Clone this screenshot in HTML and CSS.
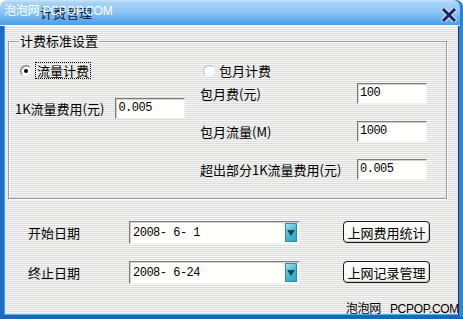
FILE: index.html
```html
<!DOCTYPE html>
<html lang="zh-CN">
<head>
  <meta charset="UTF-8" />
  <title>计费管理</title>
  <link rel="stylesheet" href="styles.css">
</head>
<body>
  <div class="window">
    <div class="titlebar">
      <span class="title">计费管理</span>
      <span class="title-mark">泡泡网 PCPOP.COM</span>
      <svg class="close" width="16" height="14" viewBox="0 0 16 14">
        <path d="M3 2 L13 12 M13 2 L3 12" stroke="#dfe8ff" stroke-width="5" stroke-linecap="round"/>
        <path d="M3 2 L13 12 M13 2 L3 12" stroke="#1b2563" stroke-width="3" stroke-linecap="square"/>
      </svg>
    </div>

    <div class="frame">
      <fieldset class="group">
        <legend>计费标准设置</legend>

        <div class="col col-left">
          <div class="radio-row">
            <span class="radio checked"></span>
            <span class="focus">流量计费</span>
          </div>
          <div class="field field-left">
            <span>1K流量费用(元)</span>
            <div class="input">0.005</div>
          </div>
        </div>

        <div class="col col-right">
          <div class="radio-row">
            <span class="radio"></span>
            <span class="radio-text">包月计费</span>
          </div>
          <div class="field first">
            <span>包月费(元)</span>
            <div class="input">100</div>
          </div>
          <div class="field">
            <span>包月流量(M)</span>
            <div class="input">1000</div>
          </div>
          <div class="field">
            <span>超出部分1K流量费用(元)</span>
            <div class="input">0.005</div>
          </div>
        </div>
      </fieldset>

      <div class="dates">
        <div class="date-row">
          <span class="date-label">开始日期</span>
          <div class="picker">
            <span class="picker-text">2008- 6- 1</span>
            <span class="drop">
              <svg width="8" height="8" viewBox="0 0 8 8"><path d="M0 1 L8 1 L4 7 Z" fill="#16485a"/></svg>
            </span>
          </div>
          <button class="btn">上网费用统计</button>
        </div>
        <div class="date-row">
          <span class="date-label">终止日期</span>
          <div class="picker">
            <span class="picker-text">2008- 6-24</span>
            <span class="drop">
              <svg width="8" height="8" viewBox="0 0 8 8"><path d="M0 1 L8 1 L4 7 Z" fill="#16485a"/></svg>
            </span>
          </div>
          <button class="btn">上网记录管理</button>
        </div>
      </div>
    </div>

    <div class="footer-mark"><span class="cn">泡泡网</span>PCPOP.COM</div>
  </div>
</body>
</html>
```

FILE: styles.css
```css
body {
  margin: 0;
  background: #ffffff;
  font-family: "Noto Sans CJK SC", "Liberation Sans", sans-serif;
  font-size: 13px;
  color: #000;
}

.window {
  position: relative;
  width: 463px;
  height: 319px;
  display: flex;
  flex-direction: column;
  overflow: hidden;
}

.titlebar {
  position: relative;
  height: 26px;
  flex: none;
  background: linear-gradient(#c8e4fc 0, #a4d2f8 3px, #8ec5f4 12px, #62acee 20px, #4e9ee9 25px, #e8f2fc 25px);
  border-radius: 7px 7px 0 0;
  box-shadow: inset -3px 0 0 #2f7fd0;
}

.title {
  position: absolute;
  left: 40px;
  top: 5px;
  font-size: 13px;
  line-height: 16px;
  color: #10234a;
}

.title-mark {
  position: absolute;
  left: 4px;
  top: 3px;
  font-family: "Liberation Sans", "Noto Sans CJK SC", sans-serif;
  font-size: 12px;
  line-height: 16px;
  color: #ffffff;
  letter-spacing: -0.2px;
}

.close {
  position: absolute;
  right: 6px;
  top: 8px;
}

.frame {
  flex: 1;
  display: flex;
  flex-direction: column;
  border-left: 4px solid #1a6cc4;
  border-right: 4px solid #2b86d6;
  border-bottom: 4px solid #1a66bb;
  box-shadow: inset 1px 0 0 #4aa2e6, inset -1px 0 0 #0b3f7c, inset 0 -1px 0 #5aaee8;
  background: repeating-linear-gradient(#f7f7f5 0, #f7f7f5 1px, #dcdcdc 1px, #dcdcdc 2px);
}

.group {
  margin: 8px 12px 0 4px;
  padding: 14px 19px 18px 6px;
  border: 1px solid #9a9a9a;
  box-shadow: 1px 1px 0 #ffffff, inset 1px 1px 0 #ffffff;
  display: flex;
}

.group legend {
  padding: 0 1px;
  margin-left: 4px;
  font-size: 13px;
  line-height: 14px;
}

.col {
  display: flex;
  flex-direction: column;
}

.col-left {
  width: 185px;
}

.col-right {
  flex: 1;
}

.radio-row {
  display: flex;
  align-items: center;
  height: 17px;
}

.radio {
  width: 10px;
  height: 10px;
  border-radius: 50%;
  background: #ffffff;
  border: 1px solid;
  border-color: #7a7a7a #e8e8e8 #e8e8e8 #7a7a7a;
  box-shadow: inset 1px 1px 0 #c0c0c0;
  position: relative;
  flex: none;
}

.col-left .radio {
  margin-left: 5px;
  margin-right: 3px;
}

.col-right .radio {
  margin-left: 3px;
  margin-right: 4px;
  border-color: #b8b8b8 #f4f4f4 #f4f4f4 #b8b8b8;
  box-shadow: none;
}

.radio.checked::after {
  content: "";
  position: absolute;
  left: 3px;
  top: 3px;
  width: 4px;
  height: 4px;
  border-radius: 50%;
  background: #000;
}

.focus {
  border: 1px dotted #000;
  padding: 0 1px;
  line-height: 15px;
}

.field {
  display: flex;
  align-items: center;
  justify-content: space-between;
  margin-top: 17px;
}

.field.first {
  margin-top: 4px;
}

.field-left {
  justify-content: flex-start;
  gap: 11px;
  margin-top: 19px;
}

.input {
  width: 66px;
  height: 19px;
  background: #fffffb;
  border: 1px solid;
  border-color: #7c7c7c #f2f2f2 #f2f2f2 #7c7c7c;
  box-shadow: inset 1px 1px 0 #d4d0c8;
  font-family: "Liberation Mono", monospace;
  font-size: 12px;
  letter-spacing: -0.5px;
  line-height: 18px;
  padding-left: 2px;
  box-sizing: content-box;
}

.dates {
  display: flex;
  flex-direction: column;
  gap: 17px;
  margin-top: 22px;
  padding-left: 24px;
}

.date-row {
  display: flex;
  align-items: flex-start;
}

.date-label {
  width: 101px;
  line-height: 23px;
}

.picker {
  width: 169px;
  height: 21px;
  display: flex;
  align-items: center;
  justify-content: space-between;
  background: #fffffb;
  border: 1px solid;
  border-color: #7c7c7c #f2f2f2 #f2f2f2 #7c7c7c;
  box-shadow: inset 1px 1px 0 #d4d0c8;
}

.picker-text {
  font-family: "Liberation Mono", monospace;
  font-size: 12px;
  letter-spacing: -0.5px;
  padding-left: 3px;
}

.drop {
  width: 12px;
  height: 19px;
  margin-right: 2px;
  display: flex;
  align-items: center;
  justify-content: center;
  background: linear-gradient(135deg, #9fe3f0, #46bcd6 50%, #2ea4c4);
  border: 1px solid #2b8fb0;
  box-sizing: border-box;
}

.btn {
  margin-left: 43px;
  width: 87px;
  height: 22px;
  padding: 0;
  font-family: "Noto Sans CJK SC", sans-serif;
  font-size: 13px;
  color: #000;
  background: linear-gradient(#ffffff, #f1f1ec);
  border: 1px solid #1c1c1c;
  border-radius: 4px;
  box-shadow: inset -1px -1px 0 #c8c8bc;
}

.footer-mark {
  position: absolute;
  right: 4px;
  bottom: 2px;
  font-family: "Liberation Sans", sans-serif;
  font-size: 12px;
  letter-spacing: -0.3px;
  line-height: 16px;
  color: #000;
}

.footer-mark .cn {
  font-family: "Noto Sans CJK SC", sans-serif;
  margin-right: 9px;
}
```
